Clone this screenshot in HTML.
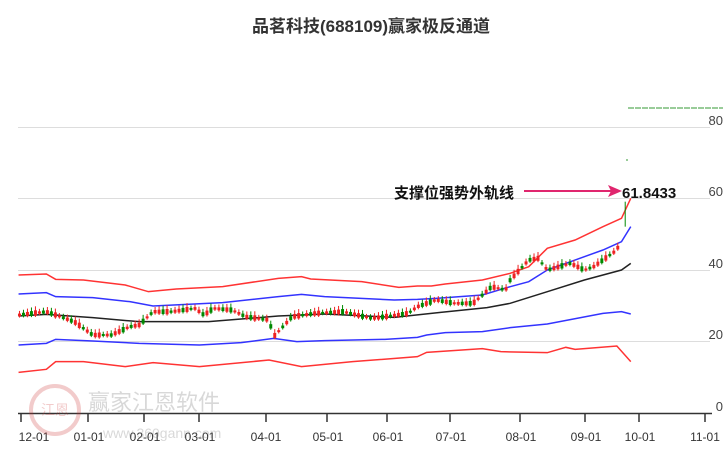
<!DOCTYPE html>
<html><head><meta charset="utf-8"><style>
body{margin:0;background:#fff;width:726px;height:450px;overflow:hidden;font-family:"Liberation Sans","Noto Sans CJK SC",sans-serif}
svg *{vector-effect:non-scaling-stroke}
</style></head><body>
<svg width="726" height="450" xmlns="http://www.w3.org/2000/svg" font-family="Liberation Sans, Noto Sans CJK SC, sans-serif">
<text x="371" y="32" text-anchor="middle" font-size="17" font-weight="bold" fill="#333">品茗科技(688109)赢家极反通道</text>
<g stroke="#ddd" stroke-width="1">
<line x1="18" y1="127.5" x2="710" y2="127.5"/><line x1="18" y1="198.5" x2="710" y2="198.5"/>
<line x1="18" y1="270.5" x2="710" y2="270.5"/><line x1="18" y1="341.5" x2="710" y2="341.5"/>
</g>
<line x1="628" y1="108" x2="723" y2="108" stroke="#393" stroke-dasharray="6,1"/>
<line x1="626" y1="160" x2="628" y2="160" stroke="#393"/>
<g font-size="13" fill="#444" text-anchor="end">
<text x="723" y="125">80</text><text x="723" y="196">60</text><text x="723" y="268">40</text><text x="723" y="339">20</text><text x="723" y="411">0</text>
</g>
<line x1="18" y1="413.5" x2="712" y2="413.5" stroke="#333" stroke-width="1.5"/>
<g stroke="#333" stroke-width="1.5">
<line x1="21" y1="414" x2="21" y2="422"/><line x1="88" y1="414" x2="88" y2="422"/><line x1="144" y1="414" x2="144" y2="422"/><line x1="199" y1="414" x2="199" y2="422"/><line x1="266" y1="414" x2="266" y2="422"/><line x1="327" y1="414" x2="327" y2="422"/><line x1="387" y1="414" x2="387" y2="422"/><line x1="450" y1="414" x2="450" y2="422"/><line x1="520" y1="414" x2="520" y2="422"/><line x1="585" y1="414" x2="585" y2="422"/><line x1="639" y1="414" x2="639" y2="422"/><line x1="705" y1="414" x2="705" y2="422"/>
</g>
<g font-size="12" fill="#333" text-anchor="middle">
<text x="34" y="441">12-01</text><text x="89" y="441">01-01</text><text x="145" y="441">02-01</text><text x="200" y="441">03-01</text><text x="266" y="441">04-01</text><text x="328" y="441">05-01</text><text x="388" y="441">06-01</text><text x="451" y="441">07-01</text><text x="521" y="441">08-01</text><text x="586" y="441">09-01</text><text x="640" y="441">10-01</text><text x="705" y="441">11-01</text>
</g>
<g opacity="0.25">
<circle cx="55" cy="410" r="24" fill="none" stroke="#c33" stroke-width="4"/>
<text x="55" y="415" font-size="14" fill="#c33" text-anchor="middle">江恩</text>
<text x="88" y="410" font-size="22" fill="#666">赢家江恩软件</text>
<text x="103" y="438" font-size="14" fill="#666">www.360gann.com</text>
</g>
<g transform="translate(0,180) scale(0.4638,0.33333)" fill="none" stroke-width="1.5">
<polyline stroke="#f33" points="40,285 100,282 120,298 180,300 270,315 320,335 380,327 480,320 600,295 650,290 670,297 780,305 860,322 900,318 930,318 960,312 1040,300 1100,280 1140,260 1180,205 1240,180 1300,140 1340,115 1360,55"/>
<polyline stroke="#33f" points="40,342 100,338 120,350 200,353 280,365 330,378 480,368 600,350 650,343 700,350 850,360 900,358 940,355 1040,345 1100,320 1140,305 1180,270 1230,245 1300,210 1340,185 1360,140"/>
<polyline stroke="#222" points="40,408 100,403 200,413 300,425 450,425 600,408 700,402 850,412 950,397 1050,383 1100,370 1180,335 1260,300 1340,270 1360,250"/>
<polyline stroke="#33f" points="40,495 100,490 120,478 200,483 300,490 430,495 520,488 590,475 640,485 700,482 830,478 900,472 920,465 960,458 1040,455 1100,443 1180,432 1300,400 1340,395 1360,402"/>
<polyline stroke="#f33" points="40,577 100,568 120,545 180,545 270,560 330,548 430,560 580,540 650,560 760,545 900,530 920,517 1040,506 1080,515 1180,518 1220,502 1240,508 1330,498 1360,545"/>
<g id="c"></g>
</g>
<text x="394" y="198" font-size="15" font-weight="bold" fill="#111">支撑位强势外轨线</text>
<line x1="524" y1="191" x2="612" y2="191" stroke="#e0266e" stroke-width="2"/>
<polygon points="622,191 608,185 611,191 608,197" fill="#e0266e"/>
<text x="622" y="198" font-size="15" font-weight="bold" fill="#111">61.8433</text>
</svg>
<script>
var p=[[40,405],[100,395],[130,410],[160,425],[200,465],[240,465],[280,440],[300,435],[330,395],[370,395],[420,385],[440,405],[460,385],[500,390],[530,410],[580,420],[590,470],[610,440],[630,410],[680,400],[740,395],[800,415],[830,410],[880,400],[900,380],[940,360],[980,370],[1020,370],[1040,345],[1060,320],[1090,330],[1100,300],[1140,240],[1160,235],[1180,270],[1230,250],[1260,270],[1280,260],[1310,230],[1330,210],[1340,175]];
function f(x){for(var i=1;i<p.length;i++){if(x<=p[i][0]){var a=p[i-1],b=p[i];return a[1]+(b[1]-a[1])*(x-a[0])/(b[0]-a[0]);}}return p[p.length-1][1];}
var g=document.getElementById('c'),s='',k=0;
for(var x=42;x<=1340;x+=8.6){k++;var y=f(x),up=((k*7)%5)<3,h=6+((k*13)%11);var c=up?'#e22':'#080';
s+='<line x1="'+x+'" y1="'+(y-h-4)+'" x2="'+x+'" y2="'+(y+h/2+4)+'" stroke="'+c+'" stroke-width="1"/>';
s+='<rect x="'+(x-3.2)+'" y="'+(y-h/2)+'" width="6.4" height="'+h+'" fill="'+c+'" stroke="none"/>';}
s+='<line x1="1348" y1="65" x2="1348" y2="140" stroke="#080" stroke-width="1"/>';
g.innerHTML=s;
</script>
</body></html>
